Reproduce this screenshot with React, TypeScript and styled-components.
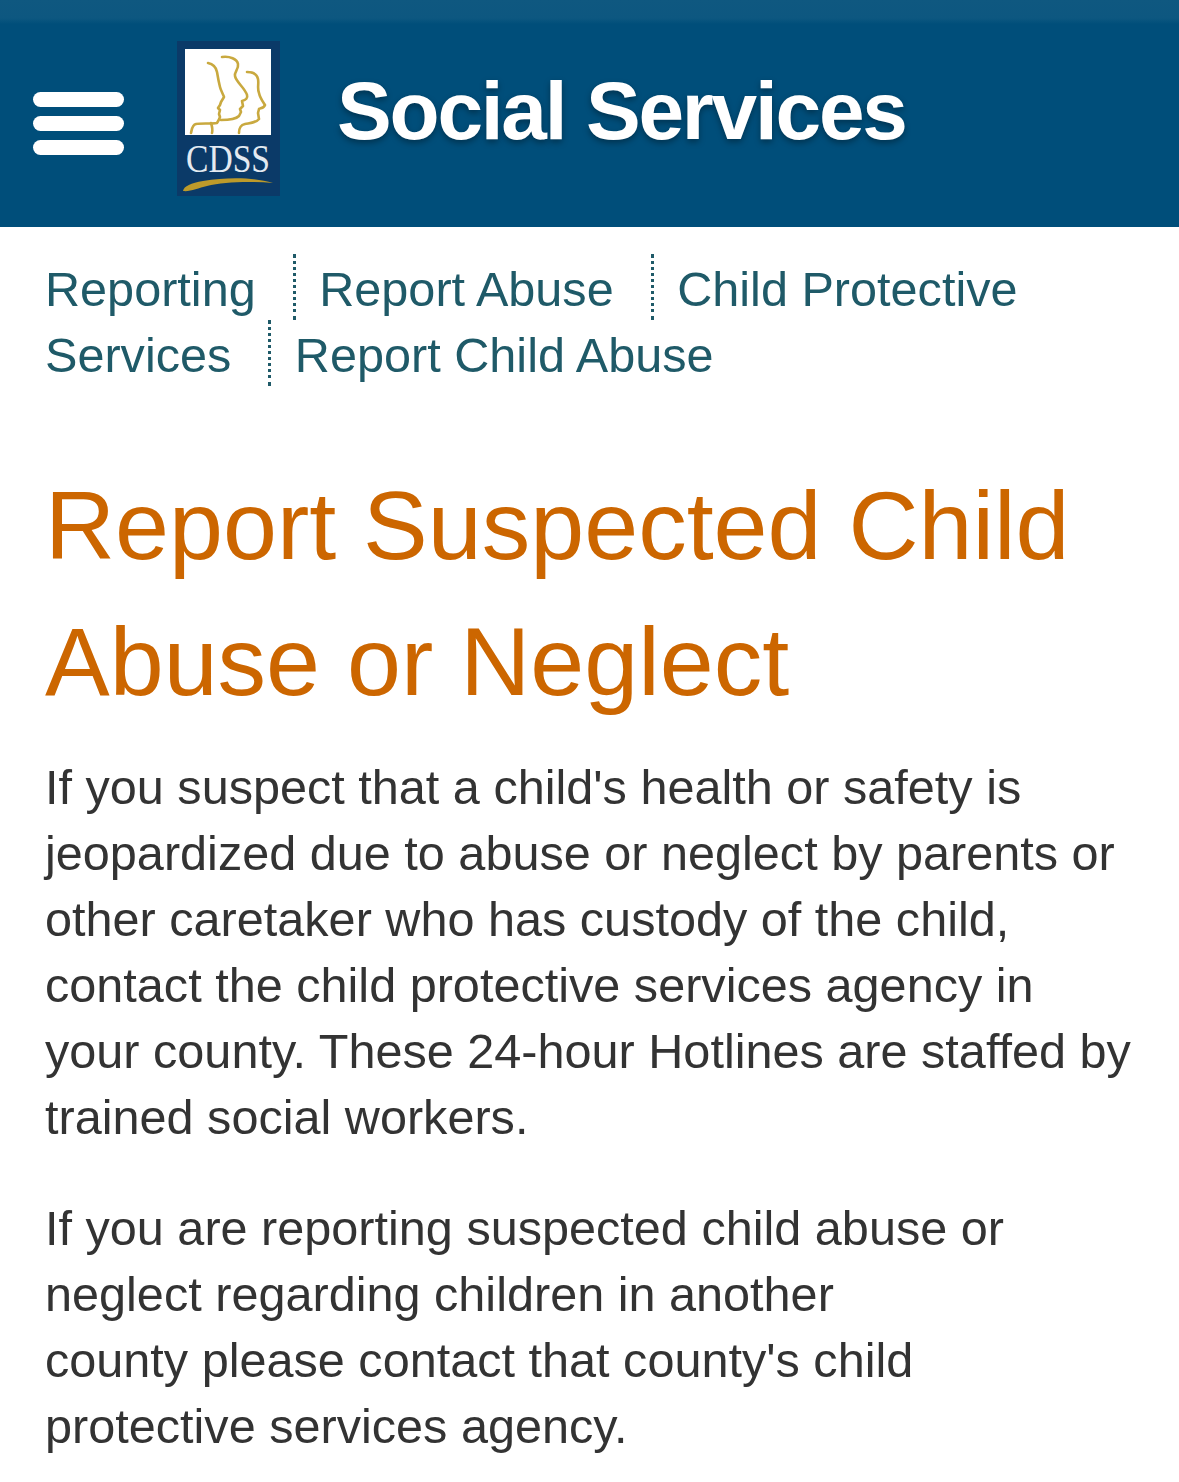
import React from 'react'
import styled, { createGlobalStyle } from 'styled-components'

const GlobalStyle = createGlobalStyle`
  html, body {
    margin: 0;
    padding: 0;
    background: #fff;
    font-family: "Liberation Sans", Arial, sans-serif;
  }
`

const crumbs = ['Reporting', 'Report Abuse', 'Child Protective Services', 'Report Child Abuse']

const Logo = () => (
  <svg width="103" height="155" viewBox="0 0 103 155">
    <rect width="103" height="155" fill="#0b3a68" />
    <rect x="8" y="8" width="86" height="86" fill="#fff" />
    <g fill="none" stroke="#c9a93f" strokeWidth="2.6" strokeLinecap="round" strokeLinejoin="round">
      <path d="M31 22c5 1 8 4 9 9 1 6 2 11 3 15 1 4 3 7 4 10l-3 5-1 3-2 3 2 2-1 4 1 3c-1 3-2 4-3 6-6 1-17 0-21 1-4 1-4 5-5 9" />
      <path d="M45 16c8-1 15 2 16 7 1 5-4 8-3 12 1 6 10 12 12 19 1 3-1 5-5 6l1 5-3 3 1 3-2 4c-3 3-11 4-18 4" />
      <path d="M70 31c6 0 10 2 11 7 1 5-1 9 1 14 1 5 4 9 6 12-1 3-4 3-6 4l-1 4 1 6c-3 4-9 4-14 5-4 1-6 3-6 9" />
      <path d="M34 82c1 3 2 6 1 10" />
    </g>
    <Mark x="9" y="131" textLength="84" lengthAdjust="spacingAndGlyphs">CDSS</Mark>
    <path d="M6 150c1-5 8-8 20-10 24-4 50-4 70 2-24-2-50-1-66 3-9 2-17 6-24 5z" fill="#bd9a2a" />
  </svg>
)

const App = () => (
  <>
    <GlobalStyle />
    <Header>
      <MenuButton>
        <MenuBar />
        <MenuBar />
        <MenuBar />
      </MenuButton>
      <LogoWrap>
        <Logo />
      </LogoWrap>
      <SiteTitle>Social Services</SiteTitle>
    </Header>
    <Main>
      <Breadcrumbs>
        {crumbs.map((c, i) => (
          <React.Fragment key={c}>
            <Crumb $first={i === 0} $last={i === crumbs.length - 1}>{c}</Crumb>{' '}
          </React.Fragment>
        ))}
      </Breadcrumbs>
      <Title>Report Suspected Child Abuse or Neglect</Title>
      <Para>
        If you suspect that a child's health or safety is jeopardized due to abuse or neglect by parents or
        other caretaker who has custody of the child, contact the child protective services agency in your
        county. These 24-hour Hotlines are staffed by trained social workers.
      </Para>
      <Para>
        If you are reporting suspected child abuse or neglect regarding children in another
        <br />
        county please contact that county's child protective services agency.
      </Para>
    </Main>
  </>
)

export default App

const Mark = styled.text`
  font-family: "Liberation Serif", serif;
  font-size: 40px;
  fill: #e3eaf1;
`

const Header = styled.header`
  display: flex;
  align-items: flex-start;
  height: 227px;
  box-sizing: border-box;
  padding: 41px 0 0 33px;
  background: linear-gradient(#0f5880 0, #0d5780 18px, #004e7a 24px);
`

const MenuButton = styled.div`
  display: flex;
  flex-direction: column;
  gap: 9px;
  width: 91px;
  margin-top: 51px;
`

const MenuBar = styled.span`
  display: block;
  height: 15px;
  border-radius: 8px;
  background: #fff;
`

const LogoWrap = styled.div`
  display: flex;
  margin-left: 53px;
`

const SiteTitle = styled.div`
  margin: 24px 0 0 57px;
  color: #fff;
  font-size: 82px;
  line-height: 92px;
  font-weight: 700;
  letter-spacing: -2.2px;
  text-shadow: 0 3px 6px rgba(0, 0, 0, 0.35);
  white-space: nowrap;
`

const Main = styled.main`
  padding: 29px 46px 0 45px;
`

const Breadcrumbs = styled.nav`
  font-size: 48.6px;
  line-height: 66px;
  color: #1f5a68;
`

const Crumb = styled.span<{ $first?: boolean; $last?: boolean }>`
  padding: 8px ${({ $last }) => ($last ? 0 : 37)}px 4px ${({ $first }) => ($first ? 0 : 10)}px;
  border-right: ${({ $last }) => ($last ? 'none' : '3px dotted #1f5a68')};
`

const Title = styled.h1`
  margin: 70px 0 0;
  color: #cc6600;
  font-size: 97px;
  line-height: 136px;
  font-weight: 400;
`

const Para = styled.p`
  margin: 45px 0 0;
  color: #333;
  font-size: 48.6px;
  line-height: 66px;
  &:first-of-type {
    margin-top: 24px;
  }
`
